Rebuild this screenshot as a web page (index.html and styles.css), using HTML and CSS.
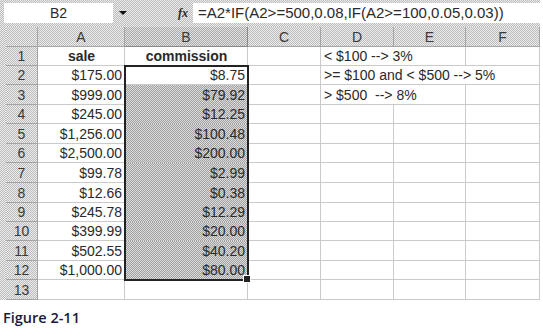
FILE: index.html
```html
<!DOCTYPE html>
<html lang="en">

<head>
    <meta charset="UTF-8">
    <meta name="viewport" content="width=device-width, initial-scale=1.0">
    <link rel="stylesheet" href="styles.css">
</head>

<body>
    <div class="sheet">
        <div class="formula-bar">
            <div class="name-box">B2</div>
            <div class="name-arrow"></div>
            <div class="fx">fx</div>
            <div class="formula">=A2*IF(A2&gt;=500,0.08,IF(A2&gt;=100,0.05,0.03))</div>
        </div>

        <div class="grid">
            <div class="corner"></div>
            <div class="col-head">A</div>
            <div class="col-head active">B</div>
            <div class="col-head">C</div>
            <div class="col-head">D</div>
            <div class="col-head">E</div>
            <div class="col-head">F</div>

            <div class="row-head">1</div>
            <div class="cell bold">sale</div>
            <div class="cell bold">commission</div>
            <div class="cell"></div>
            <div class="cell span2">&lt; $100 --&gt; 3%</div>
            <div class="cell"></div>

            <div class="row-head">2</div>
            <div class="cell num">$175.00</div>
            <div class="cell num">$8.75</div>
            <div class="cell"></div>
            <div class="cell span3">&gt;= $100 and &lt; $500 --&gt; 5%</div>

            <div class="row-head">3</div>
            <div class="cell num">$999.00</div>
            <div class="cell num sel">$79.92</div>
            <div class="cell"></div>
            <div class="cell span2">&gt; $500  --&gt; 8%</div>
            <div class="cell"></div>

            <div class="row-head">4</div>
            <div class="cell num">$245.00</div>
            <div class="cell num sel">$12.25</div>
            <div class="cell"></div><div class="cell"></div><div class="cell"></div><div class="cell"></div>

            <div class="row-head">5</div>
            <div class="cell num">$1,256.00</div>
            <div class="cell num sel">$100.48</div>
            <div class="cell"></div><div class="cell"></div><div class="cell"></div><div class="cell"></div>

            <div class="row-head">6</div>
            <div class="cell num">$2,500.00</div>
            <div class="cell num sel">$200.00</div>
            <div class="cell"></div><div class="cell"></div><div class="cell"></div><div class="cell"></div>

            <div class="row-head">7</div>
            <div class="cell num">$99.78</div>
            <div class="cell num sel">$2.99</div>
            <div class="cell"></div><div class="cell"></div><div class="cell"></div><div class="cell"></div>

            <div class="row-head">8</div>
            <div class="cell num">$12.66</div>
            <div class="cell num sel">$0.38</div>
            <div class="cell"></div><div class="cell"></div><div class="cell"></div><div class="cell"></div>

            <div class="row-head">9</div>
            <div class="cell num">$245.78</div>
            <div class="cell num sel">$12.29</div>
            <div class="cell"></div><div class="cell"></div><div class="cell"></div><div class="cell"></div>

            <div class="row-head">10</div>
            <div class="cell num">$399.99</div>
            <div class="cell num sel">$20.00</div>
            <div class="cell"></div><div class="cell"></div><div class="cell"></div><div class="cell"></div>

            <div class="row-head">11</div>
            <div class="cell num">$502.55</div>
            <div class="cell num sel">$40.20</div>
            <div class="cell"></div><div class="cell"></div><div class="cell"></div><div class="cell"></div>

            <div class="row-head">12</div>
            <div class="cell num">$1,000.00</div>
            <div class="cell num sel">$80.00</div>
            <div class="cell"></div><div class="cell"></div><div class="cell"></div><div class="cell"></div>

            <div class="row-head">13</div>
            <div class="cell"></div><div class="cell"></div><div class="cell"></div>
            <div class="cell"></div><div class="cell"></div><div class="cell"></div>

            <div class="selection"></div>
        </div>
    </div>

    <p class="caption">Figure 2-11</p>
</body>

</html>
```

FILE: styles.css
```css
* {
    box-sizing: border-box;
}

body {
    margin: 0;
    background: #fff;
    font-family: "Liberation Sans", Arial, sans-serif;
    color: #2a2a2a;
}

/* dithered grey, like the old 256 colour screenshots */
.sheet,
.corner,
.col-head,
.row-head {
    background-color: #d4d4d4;
    background-image: repeating-conic-gradient(#bcbcbc 0 25%, #ececec 0 50%);
    background-size: 2px 2px;
}

.sheet {
    width: 540px;
    height: 300px;
    padding-top: 3px;
}

.formula-bar {
    display: flex;
    height: 20px;
    margin-left: 4px;
}

.name-box {
    width: 109px;
    background: #fff;
    text-align: center;
    font-size: 14px;
    line-height: 20px;
}

.name-arrow {
    width: 20px;
    display: flex;
    align-items: center;
    justify-content: center;
}

.name-arrow::before {
    content: "";
    border-left: 4px solid transparent;
    border-right: 4px solid transparent;
    border-top: 4px solid #111;
}

.fx {
    width: 60px;
    text-align: right;
    padding-right: 5px;
    font-family: "Liberation Serif", serif;
    font-style: italic;
    font-weight: bold;
    font-size: 12px;
    line-height: 20px;
}

.formula {
    flex: 1;
    background: #fff;
    font-size: 15px;
    line-height: 20px;
    padding-left: 5px;
    white-space: nowrap;
}

.grid {
    position: relative;
    margin-top: 4px;
    margin-left: 6px;
    display: grid;
    grid-template-columns: 32px 87px 123px 73px 73px 72px 74px;
    grid-template-rows: 20px 19px 19px 20px 19px 20px 19px 20px 20px 19px 19px 20px 19px 20px;
    background: #fff;
    font-size: 14px;
}

.corner,
.col-head,
.row-head {
    border-right: 1px solid #a4a4a4;
    border-bottom: 1px solid #a4a4a4;
    display: flex;
    align-items: center;
    justify-content: center;
    color: #3a3a3a;
    line-height: 16px;
}

.col-head.active {
    background-image: repeating-conic-gradient(#a8a8a8 0 25%, #e4e4e4 0 50%);
    border-color: #888;
}

.cell {
    border-right: 1px solid #cacaca;
    border-bottom: 1px solid #cacaca;
    display: flex;
    align-items: flex-end;
    padding: 0 2px 1px 3px;
    line-height: 16px;
    white-space: pre;
}

.num {
    justify-content: flex-end;
}

.bold {
    font-weight: bold;
    justify-content: center;
}

.span2 {
    grid-column: span 2;
}

.span3 {
    grid-column: span 3;
}

.sel {
    background-color: #c0c0c0;
    background-image: repeating-conic-gradient(#a0a0a0 0 25%, #dcdcdc 0 50%);
    background-size: 2px 2px;
    border-bottom-color: transparent;
}

.selection {
    position: absolute;
    left: 118px;
    top: 38px;
    width: 125px;
    height: 216px;
    border: 2px solid #222;
}

.selection::after {
    content: "";
    position: absolute;
    right: -4px;
    bottom: -4px;
    width: 6px;
    height: 6px;
    background: #222;
    border: 1px solid #fff;
}

.caption {
    margin: 0;
    padding: 9px 0 0 3px;
    font-family: "Open Sans", sans-serif;
    font-weight: 600;
    font-size: 14.5px;
    line-height: 18px;
    color: #1a1a3a;
}
```
